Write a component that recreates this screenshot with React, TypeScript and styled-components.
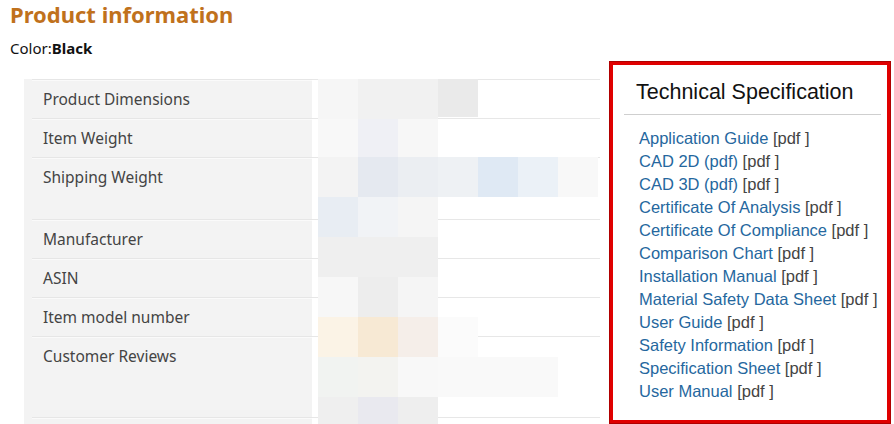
import React from "react";
import styled, { createGlobalStyle } from "styled-components";

const Global = createGlobalStyle`
  html, body { margin: 0; padding: 0; background: #fff; }
  body { font-family: "Noto Sans", "Liberation Sans", sans-serif; color: #111; }
`;

const Page = styled.div`
  display: flex;
  align-items: flex-start;
  width: 894px;
  height: 424px;
  overflow: hidden;
`;

const LeftCol = styled.div`
  width: 609px;
  flex: none;
`;

const Title = styled.h2`
  margin: 0;
  padding: 0 0 0 10px;
  font-family: "Noto Sans", sans-serif;
  font-size: 22px;
  line-height: 28px;
  font-weight: 700;
  color: #c0711c;
`;

const ColorLine = styled.div`
  margin: 10px 0 0 10px;
  font-size: 15px;
  line-height: 20px;
  color: #111;
  b { font-weight: 700; }
`;

const TableWrap = styled.div`
  position: relative;
  margin: 21px 0 0 24px;
  width: 576px;
`;

const Table = styled.div`
  display: grid;
  grid-template-columns: 288px 1fr;
`;

const Label = styled.div<{ $h: number }>`
  height: ${(p) => p.$h}px;
  box-sizing: border-box;
  background: #f3f3f3;
  padding: 9px 0 0 19px;
  font-size: 15.5px;
  line-height: 22px;
  color: #444;
  position: relative;
  &::before {
    content: "";
    position: absolute;
    left: 8px;
    right: 0;
    top: 0;
    height: 1px;
    background: #e6e6e6;
    box-shadow: 0 1px 0 #fafafa;
  }
`;

const Value = styled.div<{ $h: number }>`
  height: ${(p) => p.$h}px;
  box-sizing: border-box;
  border-top: 1px solid #e7e7e7;
`;

const Mosaic = styled.svg`
  position: absolute;
  left: 288px;
  top: 0;
  pointer-events: none;
`;

const SpecBox = styled.aside`
  width: 282px;
  height: 363px;
  margin-top: 61px;
  box-sizing: border-box;
  border: 4px solid #e00000;
  outline: 1px solid #b00000;
  outline-offset: -1px;
  background: #fff;
  padding: 0 6px 0 11px;
  flex: none;
`;

const SpecHeader = styled.div`
  font-family: "Liberation Sans", Arial, sans-serif;
  font-size: 21.5px;
  line-height: 26px;
  color: #111;
  padding: 14px 0 9px 12px;
  border-bottom: 1px solid #cfcfcf;
`;

const SpecList = styled.ul`
  list-style: none;
  margin: 0;
  padding: 12px 0 0 15px;
  font-family: "Liberation Sans", Arial, sans-serif;
  font-size: 16.5px;
  line-height: 23px;
`;

const SpecItem = styled.li`
  color: #444;
  white-space: nowrap;
`;

const SpecLink = styled.a`
  color: #25679e;
  text-decoration: none;
`;

const rows: [string, number][] = [
  ["Product Dimensions", 39],
  ["Item Weight", 39],
  ["Shipping Weight", 62],
  ["Manufacturer", 39],
  ["ASIN", 39],
  ["Item model number", 39],
  ["Customer Reviews", 81],
  ["", 40],
];

const docs = [
  "Application Guide",
  "CAD 2D (pdf)",
  "CAD 3D (pdf)",
  "Certificate Of Analysis",
  "Certificate Of Compliance",
  "Comparison Chart",
  "Installation Manual",
  "Material Safety Data Sheet",
  "User Guide",
  "Safety Information",
  "Specification Sheet",
  "User Manual",
];

// blurred value area: [x, y, w, h, color] relative to value column
const blocks: [number, number, number, number, string][] = [
  [6, 0, 40, 40, "#f6f6f6"],
  [46, 0, 80, 40, "#f1f1f1"],
  [126, 0, 40, 38, "#eaeaea"],
  [6, 40, 40, 38, "#f8f8f8"],
  [46, 40, 40, 38, "#eff0f5"],
  [86, 40, 40, 38, "#f7f7f7"],
  [6, 78, 40, 40, "#f3f3f3"],
  [46, 78, 40, 40, "#e5e9f0"],
  [86, 78, 40, 40, "#ebeef2"],
  [126, 78, 40, 40, "#eef1f4"],
  [166, 78, 40, 40, "#dfe9f4"],
  [206, 78, 40, 40, "#ebf1f7"],
  [246, 78, 40, 40, "#f8f8f8"],
  [6, 118, 40, 40, "#e8edf3"],
  [46, 118, 40, 40, "#f1f3f6"],
  [86, 118, 40, 40, "#f5f5f5"],
  [6, 158, 120, 40, "#efefef"],
  [6, 198, 40, 40, "#f7f7f7"],
  [46, 198, 40, 40, "#ededed"],
  [86, 198, 40, 40, "#f5f5f5"],
  [6, 238, 40, 40, "#fbf3e6"],
  [46, 238, 40, 40, "#f7e9d4"],
  [86, 238, 40, 40, "#f5eee9"],
  [126, 238, 40, 40, "#fbfbfb"],
  [6, 278, 40, 40, "#f1f3f1"],
  [46, 278, 40, 40, "#f3f3f0"],
  [86, 278, 40, 40, "#f8f8f8"],
  [126, 278, 120, 40, "#f9f9f9"],
  [6, 318, 40, 40, "#efefef"],
  [46, 318, 40, 40, "#e9e9ef"],
  [86, 318, 40, 40, "#eeeeee"],
];

export default function App() {
  return (
    <>
      <Global />
      <Page>
        <LeftCol>
          <Title>Product information</Title>
          <ColorLine>
            Color:<b>Black</b>
          </ColorLine>
          <TableWrap>
            <Table>
              {rows.map(([label, h], i) => (
                <React.Fragment key={i}>
                  <Label $h={h}>{label}</Label>
                  <Value $h={h} />
                </React.Fragment>
              ))}
            </Table>
            <Mosaic width="288" height="378" viewBox="0 0 288 378">
              {blocks.map(([x, y, w, h, c], i) => (
                <rect key={i} x={x} y={y} width={w} height={h} fill={c} />
              ))}
            </Mosaic>
          </TableWrap>
        </LeftCol>
        <SpecBox>
          <SpecHeader>Technical Specification</SpecHeader>
          <SpecList>
            {docs.map((d) => (
              <SpecItem key={d}>
                <SpecLink href="#">{d}</SpecLink> [pdf ]
              </SpecItem>
            ))}
          </SpecList>
        </SpecBox>
      </Page>
    </>
  );
}
